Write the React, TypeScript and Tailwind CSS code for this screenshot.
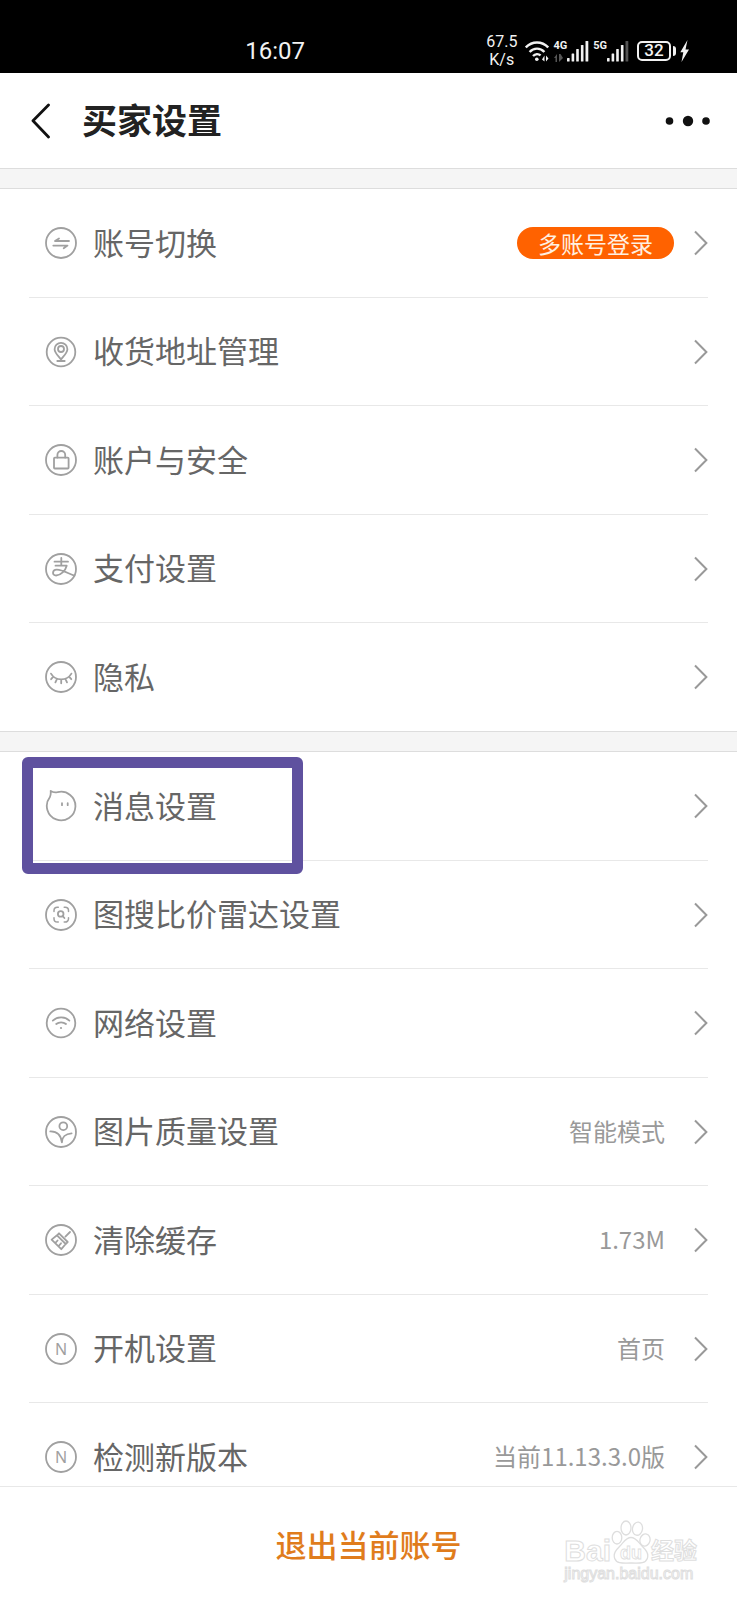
import type { ReactNode } from "react";

interface SettingItem {
  label: string;
  icon: ReactNode;
  value?: string;
  badge?: string;
  highlighted?: boolean;
}

function RowIcon({ children }: { children: ReactNode }) {
  return (
    <svg
      viewBox="0 0 32 32"
      fill="none"
      stroke="currentColor"
      strokeWidth="1.8"
      strokeLinecap="round"
      strokeLinejoin="round"
      className="h-8 w-8 shrink-0 text-[#a0a0a0]"
      aria-hidden="true"
    >
      {children}
    </svg>
  );
}

/** Round outline shared by nearly every row icon. */
function RingIcon({ r = 15, children }: { r?: number; children: ReactNode }) {
  return (
    <RowIcon>
      <circle cx="16" cy="16" r={r} />
      {children}
    </RowIcon>
  );
}

const letterIcon = (
  <RingIcon>
    <text
      x="16"
      y="21.8"
      textAnchor="middle"
      fontSize="16"
      fill="currentColor"
      stroke="none"
      className="font-['Noto_Sans',sans-serif]"
    >
      N
    </text>
  </RingIcon>
);

const accountItems: SettingItem[] = [
  {
    label: "账号切换",
    badge: "多账号登录",
    icon: (
      <RingIcon>
        <path d="M24 14H10l4-2.6M8.3 18.6h14.2l-3.8 2.6" />
      </RingIcon>
    ),
  },
  {
    label: "收货地址管理",
    icon: (
      <RingIcon r={14.3}>
        <path d="M16 23.4c-2.6-3.4-6.4-6.6-6.4-10.2a6.4 6.4 0 0 1 12.8 0c0 3.6-3.8 6.8-6.4 10.2ZM12.3 25h7.4" />
        <circle cx="16" cy="13" r="3" />
      </RingIcon>
    ),
  },
  {
    label: "账户与安全",
    icon: (
      <RingIcon>
        <rect x="9" y="13.7" width="14.6" height="10.8" rx="0.8" />
        <path d="M12.4 13.5v-2.6a3.9 3.9 0 0 1 7.8 0v2.6" />
      </RingIcon>
    ),
  },
  {
    label: "支付设置",
    icon: (
      <RingIcon>
        <path d="M9.5 8.7H23M16.3 5v7.6M10.5 12.7h11.2c-1.3 5-5.8 9.8-10.6 9.8-4.2 0-4.2-5.6.6-5.8 5-.2 11.6 3.8 17.8 6" />
      </RingIcon>
    ),
  },
  {
    label: "隐私",
    icon: (
      <RingIcon>
        <path d="M6 12.6c4.4 7.6 16 7.6 20.4 0M8.3 15.6l-2.2 2.6M12 17.8l-1.6 3.6M16.2 18.5v3.8M20.4 17.8l1.6 3.6M24 15.6l2.3 2.6" />
      </RingIcon>
    ),
  },
];

const generalItems: SettingItem[] = [
  {
    label: "消息设置",
    highlighted: true,
    icon: (
      <RowIcon>
        <path d="M5.7.9c1.9 1.5 4 1.8 6.8 1.3A14.3 14.3 0 1 1 4.8 7.3C5.7 5.7 5.9 3.3 5.7.9Z" />
        <path d="M17 13.2v2M22.7 13.2v2" />
      </RowIcon>
    ),
  },
  {
    label: "图搜比价雷达设置",
    icon: (
      <RingIcon>
        <path
          d="M9 12.6v-1a3.3 3.3 0 0 1 3.3-3.3h1M19.2 8.3h1a3.3 3.3 0 0 1 3.3 3.3v1M23.5 18.8v1a3.3 3.3 0 0 1-3.3 3.3h-1M13.3 23.1h-1A3.3 3.3 0 0 1 9 19.8v-1"
          strokeWidth="1.5"
        />
        <circle cx="15.7" cy="14.9" r="2.8" />
        <path d="m17.7 17 1.7 2" />
      </RingIcon>
    ),
  },
  {
    label: "网络设置",
    icon: (
      <RingIcon r={14.3}>
        <path d="M7.8 13.6c4.7-4.2 12-4.2 16.6 0M11.2 17c2.8-2.3 7-2.3 9.8 0" />
        <circle cx="16" cy="21" r="1.1" fill="currentColor" stroke="none" />
      </RingIcon>
    ),
  },
  {
    label: "图片质量设置",
    value: "智能模式",
    icon: (
      <RingIcon>
        <circle cx="18.3" cy="10.2" r="3.9" />
        <path d="M5.3 15.4c6.4-.2 10.6 3.6 11.6 11 0-5 3.4-8.800 9.700-9.100" />
      </RingIcon>
    ),
  },
  {
    label: "清除缓存",
    value: "1.73M",
    icon: (
      <RingIcon>
        <path d="m25 8-4.6 4.600M14 9.300l8.700 8.700-2 2L12 11.300zM12 11.300l-5.400 4.300 9.700 9.600 4.400-5.200M12.600 16.500l-2.200 2.300M16 19.300l-2.300 2.700" />
      </RingIcon>
    ),
  },
  { label: "开机设置", value: "首页", icon: letterIcon },
  { label: "检测新版本", value: "当前11.13.3.0版", icon: letterIcon },
];

function SignalBars({ weak = false }: { weak?: boolean }) {
  return (
    <svg viewBox="0 0 22 22" fill="currentColor" className="h-[22px] w-[22px]" aria-hidden="true">
      <rect x="0" y="18" width="2.6" height="3.5" rx="0.6" />
      <rect x="4.6" y="13.5" width="2.6" height="8" rx="0.6" />
      <rect x="9.2" y="9" width="2.6" height="12.5" rx="0.6" />
      <rect x="13.9" y="5" width="2.6" height="16.5" rx="0.6" />
      <rect x="18.5" y="1" width="2.8" height="20.5" rx="0.6" opacity={weak ? 0.35 : 1} />
    </svg>
  );
}

function StatusBar() {
  return (
    <div className="flex h-[73px] shrink-0 items-center justify-between bg-black pt-7 pr-12 pl-[33%] font-[Roboto,sans-serif] text-[#f2f2f2]">
      <time className="ml-0.5 text-[24px] leading-6">16:07</time>
      <div className="flex items-center">
        <div className="text-center text-[16px] leading-[18px]">
          67.5
          <br />
          K/s
        </div>
        <svg
          viewBox="0 0 24 22"
          fill="none"
          stroke="currentColor"
          strokeWidth="2.4"
          className="ml-2 h-[22px] w-6"
          aria-hidden="true"
        >
          <path d="M.8 7.5c6.200-6.700 16.200-6.700 22.400 0M4.600 12c4.200-4.500 10.600-4.500 14.800 0M8 16c2.200-2.300 5.400-2.500 7.600-.6" />
          <circle cx="11.8" cy="19.3" r="1.8" fill="currentColor" stroke="none" />
          <path d="M17 19.500 19.500 15.500V21.500ZM21 21.500V15.500L23.500 18.500Z" fill="currentColor" stroke="none" />
        </svg>
        <div className="ml-1 flex items-end">
          <div className="flex h-[22px] flex-col justify-between">
            <span className="text-[11px] leading-[11px] font-bold">4G</span>
            <svg viewBox="0 0 10 8" fill="currentColor" className="h-2 w-2.5 opacity-35" aria-hidden="true">
              <path d="M1 4 4 0v8H2.500V4ZM6 0h1.500l2.500 4-4 4Z" />
            </svg>
          </div>
          <SignalBars />
        </div>
        <div className="ml-1 flex items-start">
          <span className="text-[11px] leading-[11px] font-bold">5G</span>
          <SignalBars weak />
        </div>
        <div className="ml-2 flex items-center">
          <span className="flex h-5 w-[34px] items-center justify-center rounded-[5px] border-2 border-current text-[17px] font-medium">
            32
          </span>
          <span className="ml-0.5 h-2.5 w-[3px] rounded-r-sm bg-current" />
          <svg viewBox="0 0 9 22" fill="currentColor" className="ml-1 h-[22px] w-[9px]" aria-hidden="true">
            <path d="M7.500 0 .300 12.200h3L1.500 22 9 9.400H5.500Z" />
          </svg>
        </div>
      </div>
    </div>
  );
}

function Header() {
  return (
    <header className="flex h-[95px] shrink-0 items-center pr-[26px] pl-[30px]">
      <button type="button" aria-label="返回" className="text-[#111111]">
        <svg
          viewBox="0 0 20 36"
          fill="none"
          stroke="currentColor"
          strokeWidth="2.8"
          strokeLinecap="round"
          strokeLinejoin="round"
          className="h-9 w-5"
        >
          <path d="M18.500 2 3 17.800 18.500 34" />
        </svg>
      </button>
      <h1 className="ml-8 flex-1 pb-1 text-[35px] leading-none font-bold text-[#222222]">买家设置</h1>
      <button type="button" aria-label="更多" className="text-[#111111]">
        <svg viewBox="0 0 46 12" fill="currentColor" className="h-3 w-[46px]">
          <circle cx="4.5" cy="6" r="3.8" />
          <circle cx="23" cy="6" r="5.2" />
          <circle cx="41" cy="6" r="3.8" />
        </svg>
      </button>
    </header>
  );
}

function Divider() {
  return <div className="h-[21px] border-y border-[#dddddd] bg-[#f5f5f5]" />;
}

function SettingRow({ item }: { item: SettingItem }) {
  return (
    <li className="relative h-[108px] border-b border-[#e8e8e8] last:border-b-0 not-last:odd:h-[109px]">
      <button type="button" className="flex h-full w-full items-center pl-4 text-left">
        {item.icon}
        <span className="ml-4 flex-1 pb-1 text-[31px] leading-none text-[#666666]">{item.label}</span>
        {item.badge && (
          <span className="mr-5 flex h-8 items-center rounded-full bg-[#ff6200] px-[21px] text-[23px] leading-none text-[#fff0e0]">
            {item.badge}
          </span>
        )}
        {item.value && (
          <span className="mr-[29px] pb-0.5 text-[24px] leading-none text-[#999999]">{item.value}</span>
        )}
        <svg
          viewBox="0 0 14 26"
          fill="none"
          stroke="currentColor"
          strokeWidth="2"
          className="h-[26px] w-3.5 text-[#999999]"
          aria-hidden="true"
        >
          <path d="M1 1.500 12.400 13 1 24.500" />
        </svg>
      </button>
      {item.highlighted && (
        <div className="pointer-events-none absolute top-[5px] -left-[7px] z-10 h-[117px] w-[281px] rounded-md border-[11px] border-[#5f519f]" />
      )}
    </li>
  );
}

function SettingList({ items }: { items: SettingItem[] }) {
  return (
    <ul className="mx-[29px]">
      {items.map((item) => (
        <SettingRow key={item.label} item={item} />
      ))}
    </ul>
  );
}

function Watermark() {
  return (
    <div className="pointer-events-none absolute right-10 bottom-4 font-['Liberation_Sans','Noto_Sans_CJK_SC',sans-serif] text-white [-webkit-text-stroke:1px_#dedede]">
      <div className="flex items-end leading-none font-bold">
        <span className="text-[30px] leading-[26px]">Bai</span>
        <svg viewBox="0 0 40 44" fill="#ffffff" stroke="#dedede" strokeWidth="1.3" className="h-11 w-10" aria-hidden="true">
          <ellipse cx="6" cy="17.7" rx="4.8" ry="6.3" />
          <ellipse cx="15" cy="8" rx="5" ry="7" />
          <ellipse cx="26.5" cy="8.7" rx="5" ry="6.6" transform="rotate(10 26.5 8.7)" />
          <ellipse cx="34" cy="20" rx="5" ry="6.2" transform="rotate(15 34 20)" />
          <path d="M20 17.500c5 0 7.500 5 11 8.500 4 4 7 7.500 5.300 12.500-1.600 4.500-6 5-16.300 4.500-10.300.5-14.700 0-16.300-4.500C2 33.500 5 30 9 26c3.500-3.500 6-8.500 11-8.500Z" />
          <text x="20" y="39" textAnchor="middle" fontSize="18" strokeWidth="0.8">
            du
          </text>
        </svg>
        <span className="text-[23px] leading-[26px]">经验</span>
      </div>
      <div className="text-[16px] leading-5">jingyan.baidu.com</div>
    </div>
  );
}

export default function App() {
  return (
    <div className="flex h-screen flex-col bg-white font-['Noto_Sans_CJK_SC',sans-serif]">
      <StatusBar />
      <Header />
      <main className="min-h-0 flex-1 overflow-hidden">
        <Divider />
        <SettingList items={accountItems} />
        <Divider />
        <SettingList items={generalItems} />
      </main>
      <footer className="relative flex h-[114px] shrink-0 items-center justify-center border-t border-[#e8e8e8] bg-white">
        <button type="button" className="text-[31px] leading-none font-medium text-[#e07c1c]">
          退出当前账号
        </button>
        <Watermark />
      </footer>
    </div>
  );
}
